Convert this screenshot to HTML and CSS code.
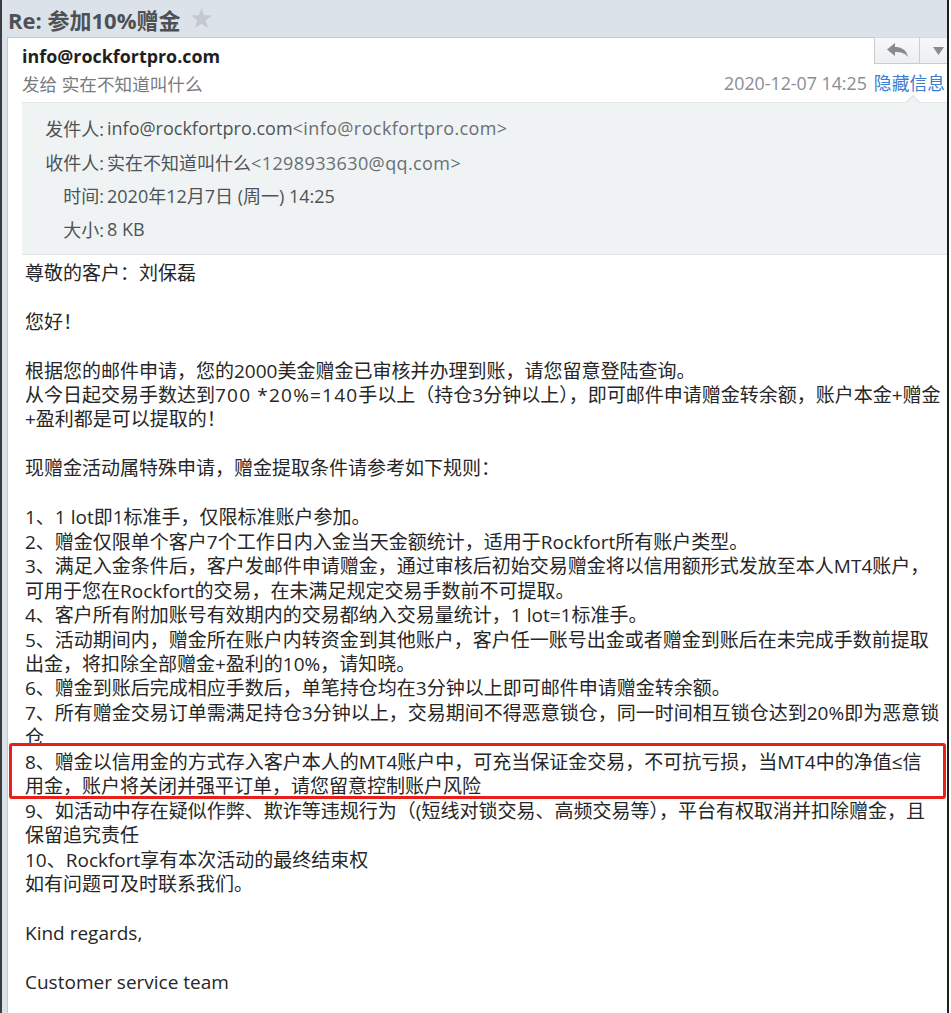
FILE: index.html
```html
<!DOCTYPE html>
<html lang="zh-CN">
<head>
<meta charset="utf-8">
<title>Re: 参加10%赠金</title>
<link rel="stylesheet" href="styles.css">
</head>
<body>
<div class="page">
  <div class="titlebar">
    <span class="title">Re: 参加10%赠金</span>
    <svg class="star" width="21" height="20" viewBox="0 0 24 23"><polygon points="12,0 15,8.2 24,8.6 17,14.2 19.4,23 12,18 4.6,23 7,14.2 0,8.6 9,8.2" fill="#c5c9ce"/></svg>
  </div>
  <div class="panel">
    <div class="hdr">
      <div class="who">
        <div class="from">info@rockfortpro.com</div>
        <div class="to">发给 实在不知道叫什么</div>
      </div>
      <div class="hdr-right">
        <div class="btns">
          <span class="btn reply"><svg width="21" height="15" viewBox="0 0 21 15"><path d="M0 6.5 L8 0 L8 4 C14 4 19.5 6.5 21 14 C18 10 13.5 9 8 9 L8 13 Z" fill="#878c92"/></svg></span>
          <span class="btn more"><svg width="11" height="8" viewBox="0 0 11 8"><path d="M0 0 H11 L5.5 8 Z" fill="#878c92"/></svg></span>
        </div>
        <div class="when"><span class="date">2020-12-07 14:25</span><span class="hide">隐藏信息</span></div>
      </div>
    </div>
    <div class="meta">
      <div class="mrow"><span class="lbl">发件人:</span><span class="val">info@rockfortpro.com<span class="addr">&lt;info@rockfortpro.com&gt;</span></span></div>
      <div class="mrow"><span class="lbl">收件人:</span><span class="val">实在不知道叫什么<span class="addr">&lt;1298933630@qq.com&gt;</span></span></div>
      <div class="mrow"><span class="lbl">时间:</span><span class="val">2020年12月7日 (周一) 14:25</span></div>
      <div class="mrow"><span class="lbl">大小:</span><span class="val">8 KB</span></div>
    </div>
    <div class="mail">
      <div class="ln">尊敬的客户：刘保磊</div>
      <div class="ln">&nbsp;</div>
      <div class="ln">您好！</div>
      <div class="ln">&nbsp;</div>
      <div class="ln">根据您的邮件申请，您的2000美金赠金已审核并办理到账，请您留意登陆查询。</div>
      <div class="ln">从今日起交易手数达到<span class="num">700 *20%=140</span>手以上（持仓3分钟以上），即可邮件申请赠金转余额，账户本金+赠金</div>
      <div class="ln">+盈利都是可以提取的！</div>
      <div class="ln">&nbsp;</div>
      <div class="ln">现赠金活动属特殊申请，赠金提取条件请参考如下规则：</div>
      <div class="ln">&nbsp;</div>
      <div class="ln">1、1 lot即1标准手，仅限标准账户参加。</div>
      <div class="ln">2、赠金仅限单个客户7个工作日内入金当天金额统计，适用于Rockfort所有账户类型。</div>
      <div class="ln">3、满足入金条件后，客户发邮件申请赠金，通过审核后初始交易赠金将以信用额形式发放至本人MT4账户，</div>
      <div class="ln">可用于您在Rockfort的交易，在未满足规定交易手数前不可提取。</div>
      <div class="ln">4、客户所有附加账号有效期内的交易都纳入交易量统计，1 lot=1标准手。</div>
      <div class="ln">5、活动期间内，赠金所在账户内转资金到其他账户，客户任一账号出金或者赠金到账后在未完成手数前提取</div>
      <div class="ln">出金，将扣除全部赠金+盈利的10%，请知晓。</div>
      <div class="ln">6、赠金到账后完成相应手数后，单笔持仓均在3分钟以上即可邮件申请赠金转余额。</div>
      <div class="ln">7、所有赠金交易订单需满足持仓3分钟以上，交易期间不得恶意锁仓，同一时间相互锁仓达到20%即为恶意锁</div>
      <div class="ln">仓</div>
      <div class="hl">
        <div class="ln">8、赠金以信用金的方式存入客户本人的MT4账户中，可充当保证金交易，不可抗亏损，当MT4中的净值≤信</div>
        <div class="ln">用金，账户将关闭并强平订单，请您留意控制账户风险</div>
      </div>
      <div class="ln">9、如活动中存在疑似作弊、欺诈等违规行为（(短线对锁交易、高频交易等），平台有权取消并扣除赠金，且</div>
      <div class="ln">保留追究责任</div>
      <div class="ln">10、Rockfort享有本次活动的最终结束权</div>
      <div class="ln">如有问题可及时联系我们。</div>
      <div class="ln">&nbsp;</div>
      <div class="ln">Kind regards,</div>
      <div class="ln">&nbsp;</div>
      <div class="ln">Customer service team</div>
    </div>
  </div>
</div>
</body>
</html>
```
FILE: styles.css
```css
html, body {
  margin: 0;
  padding: 0;
  background: #ffffff;
}
body {
  font-family: "Open Sans", "Noto Sans CJK SC", sans-serif;
  overflow: hidden;
}
.page {
  width: 945px;
  min-height: 1013px;
  border-left: 2px solid #3a3d40;
  border-right: 2px solid #1e1e1e;
  background: #dce2e9;
  display: flex;
  flex-direction: column;
  overflow: hidden;
}
.titlebar {
  height: 37px;
  padding-left: 6px;
  display: flex;
  align-items: center;
  gap: 10px;
}
.title {
  font-size: 22px;
  font-weight: bold;
  color: #4d5156;
  white-space: nowrap;
}
.star {
  display: block;
  margin-top: -2px;
}
.panel {
  flex: 1;
  margin-left: 5px;
  background: #ffffff;
  border-top: 1px solid #c2c9d0;
  border-left: 1px solid #c2c9d0;
}
.hdr {
  display: flex;
  justify-content: space-between;
  padding-left: 14px;
}
.who {
  padding-top: 5px;
}
.from {
  font-size: 17.9px;
  font-weight: bold;
  color: #1f1f1f;
  line-height: 26px;
}
.to {
  font-size: 17.6px;
  color: #777b80;
  line-height: 30px;
}
.hdr-right {
  display: flex;
  flex-direction: column;
  align-items: flex-end;
}
.btns {
  display: flex;
  margin-top: -1px;
  height: 26px;
}
.btn {
  display: flex;
  align-items: center;
  justify-content: center;
  height: 25px;
  background: linear-gradient(#f7f8f9, #eceef0);
  border: 1px solid #c9cdd2;
  border-top-color: #d6dadd;
}
.reply {
  width: 44px;
}
.more {
  border-left: none;
  border-right: none;
  justify-content: flex-start;
  padding-left: 13px;
  width: 14px;
}
.when {
  margin-top: 7px;
  font-size: 17.8px;
  line-height: 26px;
  white-space: nowrap;
}
.date {
  color: #8a8d91;
}
.hide {
  color: #3b7dd0;
  margin-left: 7px;
  margin-right: 2px;
}
.meta {
  position: relative;
  margin-left: 14px;
  margin-top: 3px;
  padding: 8px 0;
  background: #eff3f3;
  border-top: 1px solid #e1e5e5;
  border-bottom: 1px solid #e3e6e6;
  font-size: 18px;
  color: #4e5358;
}
.meta::before {
  content: "";
  position: absolute;
  top: -6px;
  right: 29px;
  width: 9px;
  height: 9px;
  background: #eff3f3;
  border-top: 1px solid #dde1e1;
  border-left: 1px solid #dde1e1;
  transform: rotate(45deg);
}
.mrow {
  display: flex;
  height: 33.7px;
  align-items: center;
  white-space: nowrap;
}
.lbl {
  width: 82px;
  text-align: right;
}
.val {
  margin-left: 3px;
}
.addr {
  color: #6a6f74;
  letter-spacing: 0.4px;
}
.mail {
  padding: 6px 0 0 17px;
  font-size: 19px;
  line-height: 24.45px;
  color: #262626;
}
.ln {
  white-space: nowrap;
}
.num {
  letter-spacing: 1.2px;
}
.hl {
  position: relative;
}
.hl::after {
  content: "";
  position: absolute;
  top: -7px;
  bottom: 0;
  left: -16px;
  right: 1px;
  border: 3px solid #e8201a;
  border-radius: 3px;
  pointer-events: none;
}
```
